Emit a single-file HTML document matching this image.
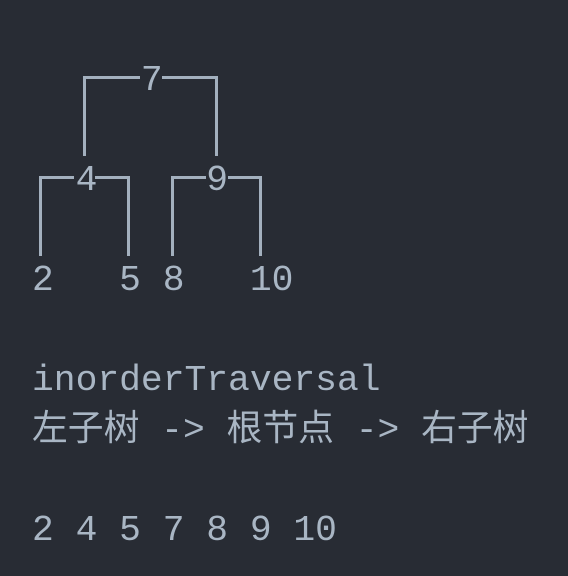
<!DOCTYPE html>
<html><head><meta charset="utf-8"><style>
html,body{margin:0;padding:0;background:#282c34;width:568px;height:576px;overflow:hidden}
pre{position:absolute;left:32px;top:56px;margin:0;font-family:"Liberation Mono","Noto Sans CJK SC",monospace;font-size:36.3px;line-height:50px;color:#a9b6c4}
pre span{font-size:35.8px}
.l{position:absolute;background:#a3b0be}
</style></head><body>
<div class="l" style="left:83px;top:76px;width:57px;height:3px"></div>
<div class="l" style="left:162px;top:76px;width:56px;height:3px"></div>
<div class="l" style="left:83px;top:76px;width:3px;height:80px"></div>
<div class="l" style="left:215px;top:76px;width:3px;height:80px"></div>
<div class="l" style="left:39px;top:176px;width:35px;height:3px"></div>
<div class="l" style="left:95px;top:176px;width:35px;height:3px"></div>
<div class="l" style="left:39px;top:176px;width:3px;height:80px"></div>
<div class="l" style="left:127px;top:176px;width:3px;height:80px"></div>
<div class="l" style="left:171px;top:176px;width:35px;height:3px"></div>
<div class="l" style="left:228px;top:176px;width:34px;height:3px"></div>
<div class="l" style="left:171px;top:176px;width:3px;height:80px"></div>
<div class="l" style="left:259px;top:176px;width:3px;height:80px"></div>
<pre>     7

  4     9

2   5 8   10

inorderTraversal
<span>左子树</span> -&gt; <span>根节点</span> -&gt; <span>右子树</span>

2 4 5 7 8 9 10</pre>
</body></html>
